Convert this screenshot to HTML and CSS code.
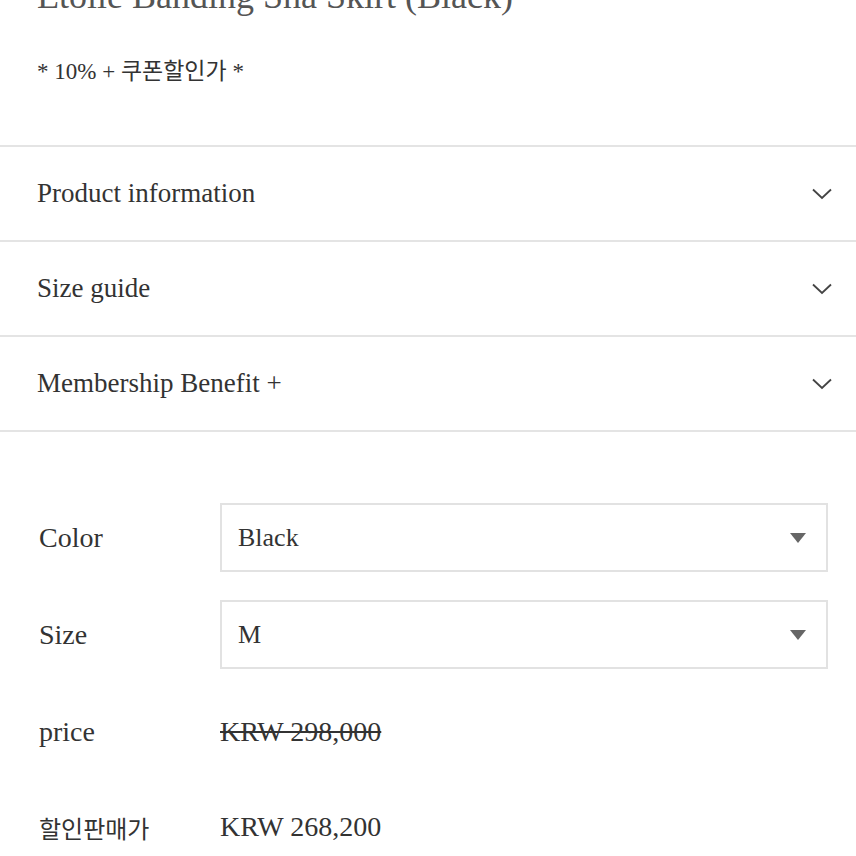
FILE: index.html
```html
<!DOCTYPE html>
<html lang="ko">
<head>
    <meta name="viewport" content="width=device-width, initial-scale=1.0">
    <title>Etoile Banding Sha Skirt (Black)</title>
    <link rel="stylesheet" href="styles.css">
</head>
<body>
    <div class="product">
        <h1 class="title">Etoile Banding Sha Skirt (Black)</h1>
        <p class="summary">* 10% + 쿠폰할인가 *</p>

        <div class="accordion">
            <div class="acc-row">
                <span>Product information</span>
                <svg class="chevron" viewBox="0 0 20 12"><path d="M1 1.5 L10 10 L19 1.5"/></svg>
            </div>
            <div class="acc-row">
                <span>Size guide</span>
                <svg class="chevron" viewBox="0 0 20 12"><path d="M1 1.5 L10 10 L19 1.5"/></svg>
            </div>
            <div class="acc-row">
                <span>Membership Benefit +</span>
                <svg class="chevron" viewBox="0 0 20 12"><path d="M1 1.5 L10 10 L19 1.5"/></svg>
            </div>
        </div>

        <div class="options">
            <div class="opt-row select-row">
                <label class="opt-label">Color</label>
                <div class="select">
                    <span>Black</span>
                    <span class="caret"></span>
                </div>
            </div>
            <div class="opt-row select-row">
                <label class="opt-label">Size</label>
                <div class="select">
                    <span>M</span>
                    <span class="caret"></span>
                </div>
            </div>
            <div class="opt-row price-row">
                <span class="opt-label">price</span>
                <span class="old-price">KRW 298,000</span>
            </div>
            <div class="opt-row price-row">
                <span class="opt-label opt-label-kr">할인판매가</span>
                <span class="sale-price">KRW 268,200</span>
            </div>
        </div>
    </div>
</body>
</html>
```

FILE: styles.css
```css
* {
    margin: 0;
    padding: 0;
    box-sizing: border-box;
}
body {
    font-family: 'Liberation Serif', 'Noto Sans CJK KR', serif;
    background: #fff;
    color: #333;
    width: 856px;
    height: 856px;
    overflow: hidden;
}
.title {
    font-weight: normal;
    font-size: 36px;
    line-height: 40px;
    color: #555;
    padding: 0 37px;
    margin-top: -24px;
    white-space: nowrap;
}
.summary {
    font-size: 23px;
    line-height: 30px;
    padding: 0 37px;
    margin-top: 41px;
    color: #333;
}
.accordion {
    margin-top: 58px;
    border-top: 2px solid #e4e4e4;
}
.acc-row {
    display: flex;
    align-items: center;
    justify-content: space-between;
    height: 95px;
    padding: 0 24px 0 37px;
    border-bottom: 2px solid #e4e4e4;
    font-size: 27px;
    color: #333;
}
.chevron {
    width: 20px;
    height: 12px;
    fill: none;
    stroke: #444;
    stroke-width: 1.8;
}
.options {
    padding: 71px 28px 0 39px;
}
.opt-row {
    display: flex;
    align-items: center;
}
.select-row {
    margin-bottom: 28px;
}
.opt-label {
    width: 181px;
    font-size: 28px;
    color: #333;
}
.opt-label-kr {
    font-size: 24px;
}
.select {
    flex: 1;
    height: 69px;
    border: 2px solid #e2e2e2;
    display: flex;
    align-items: center;
    justify-content: space-between;
    padding: 0 20px 0 16px;
    font-size: 26px;
    color: #333;
}
.caret {
    width: 0;
    height: 0;
    border-left: 8px solid transparent;
    border-right: 8px solid transparent;
    border-top: 10px solid #666;
}
.price-row {
    height: 70px;
    margin-bottom: 25px;
}
.select-row + .price-row {
    margin-top: 6px;
}
.old-price {
    font-size: 28px;
    text-decoration: line-through;
}
.sale-price {
    font-size: 28px;
}
```
